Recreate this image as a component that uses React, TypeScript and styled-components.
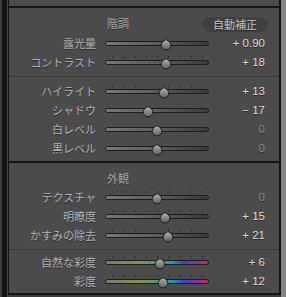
import React, { useId } from 'react';
import styled, { createGlobalStyle } from 'styled-components';

const GlobalStyle = createGlobalStyle`
    html, body {
        margin: 0;
        padding: 0;
        background: #3c3c3c;
    }
`

type SliderRow = {
    label: string;
    value: number;
    max: number;
    text: string;
    ticks?: boolean;
    color?: boolean;
};

const toneTop: SliderRow[] = [
    { label: '露光量', value: 0.9, max: 5, text: '+ 0.90' },
    { label: 'コントラスト', value: 18, max: 100, text: '+ 18', ticks: true },
];

const toneBottom: SliderRow[] = [
    { label: 'ハイライト', value: 13, max: 100, text: '+ 13', ticks: true },
    { label: 'シャドウ', value: -17, max: 100, text: '− 17' },
    { label: '白レベル', value: 0, max: 100, text: '0' },
    { label: '黒レベル', value: 0, max: 100, text: '0' },
];

const presenceTop: SliderRow[] = [
    { label: 'テクスチャ', value: 0, max: 100, text: '0', ticks: true },
    { label: '明瞭度', value: 15, max: 100, text: '+ 15', ticks: true },
    { label: 'かすみの除去', value: 21, max: 100, text: '+ 21', ticks: true },
];

const presenceBottom: SliderRow[] = [
    { label: '自然な彩度', value: 6, max: 100, text: '+ 6', ticks: true, color: true },
    { label: '彩度', value: 12, max: 100, text: '+ 12', ticks: true, color: true },
];

const TRACK_WIDTH = 104;

const Thumb = ({ left }: { left: number }) => {
    const id = useId();
    return (
        <ThumbSvg width="12" height="12" viewBox="0 0 12 12" style={{ left: left - 6 }}>
            <defs>
                <linearGradient id={id} x1="0" y1="0" x2="0" y2="1">
                    <stop offset="0" stopColor="#b4b4b4" />
                    <stop offset="1" stopColor="#5c5c5c" />
                </linearGradient>
            </defs>
            <path
                d="M6 0.5 L8.59 2.16 A4.8 4.8 0 1 1 3.41 2.16 Z"
                fill={`url(#${id})`}
                stroke="#1c1c1c"
                strokeWidth="1"
            />
        </ThumbSvg>
    );
};

const Row = ({ row }: { row: SliderRow }) => {
    const pos = TRACK_WIDTH / 2 + (row.value / row.max) * (TRACK_WIDTH / 2);
    return (
        <RowBox>
            <Label>{row.label}</Label>
            <SliderBox>
                {row.ticks && (
                    <Ticks>
                        {Array.from({ length: 9 }).map((_, i) => (
                            <Tick key={i} style={{ left: 7 + i * 11.25 }} />
                        ))}
                    </Ticks>
                )}
                <Track $color={row.color} />
                <Thumb left={pos} />
            </SliderBox>
            <Value $zero={row.value === 0}>{row.text}</Value>
        </RowBox>
    );
};

const App = () => {
    return (
        <>
            <GlobalStyle />
            <Frame>
                <Rail />
                <Seam />
                <PanelCol>
                    <TopStub />
                    <Section $border>
                        <Header $height={26}>
                            <Title>階調</Title>
                            <AutoButton>自動補正</AutoButton>
                        </Header>
                        {toneTop.map((r) => <Row key={r.label} row={r} />)}
                        <Divider $above={4} $below={5} />
                        {toneBottom.map((r) => <Row key={r.label} row={r} />)}
                        <Spacer $h={3} />
                    </Section>
                    <Section $border $bottom>
                        <Header $height={25}>
                            <Title>外観</Title>
                        </Header>
                        {presenceTop.map((r) => <Row key={r.label} row={r} />)}
                        <Divider $above={4} $below={3} />
                        {presenceBottom.map((r) => <Row key={r.label} row={r} />)}
                        <Spacer $h={2} />
                    </Section>
                </PanelCol>
                <Scrollbar />
            </Frame>
        </>
    );
};

const Frame = styled.div`
    width: 286px;
    height: 297px;
    display: flex;
    background: #3c3c3c;
    padding-left: 2px;
    box-sizing: border-box;
    overflow: hidden;
`

const Rail = styled.div`
    width: 5px;
    background: #141414;
`

const Seam = styled.div`
    width: 1px;
    background: #474747;
`

const PanelCol = styled.div`
    width: 270px;
    height: 295px;
    display: flex;
    flex-direction: column;
    background: #4b4b4b;
    border-left: 1px solid #141414;
    border-right: 2px solid #141414;
`

const TopStub = styled.div`
    height: 6px;
    background: #4b4b4b;
`

const Section = styled.div<{ $border?: boolean; $bottom?: boolean }>`
    display: flex;
    flex-direction: column;
    border-top: ${(p) => (p.$border ? '2px solid #141414' : 'none')};
    border-bottom: ${(p) => (p.$bottom ? '2px solid #141414' : 'none')};
`

const Header = styled.div<{ $height: number }>`
    height: ${(p) => p.$height}px;
    display: flex;
    align-items: flex-start;
    padding-top: 8px;
    padding-left: 98px;
    padding-right: 11px;
    box-sizing: border-box;
`

const Title = styled.span`
    font-family: "Noto Sans CJK JP", "Liberation Sans", sans-serif;
    font-size: 11px;
    line-height: 15px;
    color: #a6a6a6;
    text-shadow: 0 1px 0 #2e2e2e;
`

const AutoButton = styled.div`
    margin-left: auto;
    margin-top: 1px;
    width: 66px;
    height: 15px;
    border-radius: 8px;
    background: #404040;
    color: #c4c4c4;
    font-family: "Noto Sans CJK JP", "Liberation Sans", sans-serif;
    font-size: 11px;
    line-height: 15px;
    text-align: center;
    text-shadow: 0 1px 0 #262626;
`

const RowBox = styled.div`
    height: 19px;
    display: flex;
    align-items: center;
`

const Label = styled.div`
    width: 87px;
    margin-right: 9px;
    text-align: right;
    font-family: "Noto Sans CJK JP", "Liberation Sans", sans-serif;
    font-size: 11px;
    line-height: 19px;
    color: #b4b4b4;
    text-shadow: 0 1px 0 #2a2a2a;
    white-space: nowrap;
`

const SliderBox = styled.div`
    position: relative;
    width: ${TRACK_WIDTH}px;
    height: 19px;
    display: flex;
    align-items: center;
`

const Track = styled.div<{ $color?: boolean }>`
    width: 100%;
    height: 5px;
    box-sizing: border-box;
    border: 1px solid #1c1c1c;
    border-radius: 3px;
    background: ${(p) =>
        p.$color
            ? 'linear-gradient(90deg, #7a7a72 0%, #8c8c5a 32%, #46a06e 52%, #2a98b0 64%, #3248c0 77%, #8a30b0 89%, #d2284a 100%)'
            : 'linear-gradient(90deg, #777777 0%, #5c5c5c 50%, #3a3a3a 100%)'};
`

const Ticks = styled.div`
    position: absolute;
    left: 0;
    top: 3px;
    width: 100%;
    height: 2px;
`

const Tick = styled.span`
    position: absolute;
    top: 0;
    width: 1px;
    height: 2px;
    background: #2a2a2a;
`

const ThumbSvg = styled.svg`
    position: absolute;
    top: 5px;
    display: block;
`

const Value = styled.div<{ $zero?: boolean }>`
    width: 56px;
    text-align: right;
    font-family: "Liberation Sans", Arial, sans-serif;
    font-size: 11.5px;
    line-height: 19px;
    color: ${(p) => (p.$zero ? '#8e8e8e' : '#dcdcdc')};
    text-shadow: 0 1px 0 #262626;
    white-space: nowrap;
`

const Divider = styled.div<{ $above: number; $below: number }>`
    height: 1px;
    background: #3a3a3a;
    margin-top: ${(p) => p.$above}px;
    margin-bottom: ${(p) => p.$below}px;
`

const Spacer = styled.div<{ $h: number }>`
    height: ${(p) => p.$h}px;
`

const Scrollbar = styled.div`
    width: 5px;
    background: #858585;
`

export default App;
